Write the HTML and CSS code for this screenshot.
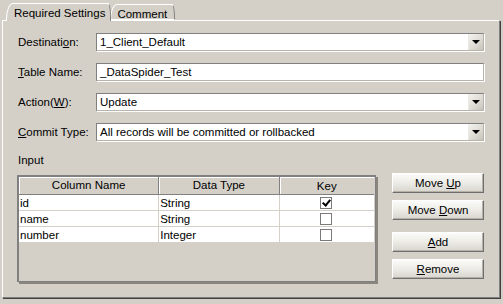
FILE: index.html
```html
<!DOCTYPE html>
<html lang="en">
  <head>
    <meta charset="UTF-8" />
    <title>Table Update - Required Settings</title>
    <link rel="stylesheet" href="styles.css">
  </head>
  <body>
    <div class="tabs">
      <div class="tab active">Required Settings</div>
      <div class="tab">Comment</div>
    </div>

    <div class="panel">
      <div class="field">
        <label>Destinati<u>o</u>n:</label>
        <div class="combo">
          <span class="value">1_Client_Default</span>
          <span class="drop"></span>
        </div>
      </div>

      <div class="field">
        <label><u>T</u>able Name:</label>
        <div class="text-box">_DataSpider_Test</div>
      </div>

      <div class="field">
        <label>Action(<u>W</u>):</label>
        <div class="combo">
          <span class="value">Update</span>
          <span class="drop"></span>
        </div>
      </div>

      <div class="field">
        <label><u>C</u>ommit Type:</label>
        <div class="combo">
          <span class="value">All records will be committed or rollbacked</span>
          <span class="drop"></span>
        </div>
      </div>

      <div class="section-title">Input</div>

      <div class="input-area">
        <div class="grid">
          <div class="grid-head">
            <div class="col-name">Column Name</div>
            <div class="col-type">Data Type</div>
            <div class="col-key">Key</div>
          </div>
          <div class="grid-row">
            <div class="col-name">id</div>
            <div class="col-type">String</div>
            <div class="col-key"><span class="check checked"></span></div>
          </div>
          <div class="grid-row">
            <div class="col-name">name</div>
            <div class="col-type">String</div>
            <div class="col-key"><span class="check"></span></div>
          </div>
          <div class="grid-row">
            <div class="col-name">number</div>
            <div class="col-type">Integer</div>
            <div class="col-key"><span class="check"></span></div>
          </div>
        </div>

        <div class="buttons">
          <div class="button-group">
            <button>Move <u>U</u>p</button>
            <button>Move <u>D</u>own</button>
          </div>
          <div class="button-group">
            <button><u>A</u>dd</button>
            <button><u>R</u>emove</button>
          </div>
        </div>
      </div>
    </div>
  </body>
</html>
```

FILE: styles.css
```css
/* General */
body {
  margin: 0;
  background: #d4d0c8;
  font-family: "Liberation Sans", Arial, sans-serif;
  font-size: 11.5px;
  color: #000;
  width: 503px;
  height: 304px;
  overflow: hidden;
}

u {
  text-decoration: underline;
  text-underline-offset: 1px;
}

/* Tabs */
.tabs {
  display: flex;
  height: 20px;
  padding-left: 6px;
  align-items: flex-end;
}

.tab {
  box-sizing: border-box;
  height: 17px;
  padding: 2px 5px 0 7px;
  line-height: 14px;
  border-top: 1px solid #fff;
  border-left: 1px solid #fff;
  border-right: 1px solid #808080;
  border-top-left-radius: 7px 16px;
  border-top-right-radius: 3px 14px;
  background: #d4d0c8;
  position: relative;
}

.tab.active {
  z-index: 1;
  height: 18px;
  margin-bottom: -1px;
}

.tab + .tab {
  margin-left: -1px;
  padding: 2px 7px 0 6px;
  height: 16px;
  border-bottom: 1px solid #fff;
}

/* Panel */
.panel {
  box-sizing: border-box;
  width: 498px;
  height: 278px;
  margin-left: 2px;
  border: 1px solid;
  border-color: #fff #808080 #808080 #fff;
  box-shadow: 1px 1px 0 #404040;
  padding: 12px 14px 0 15px;
}

/* Form rows */
.field {
  display: flex;
  align-items: center;
  height: 18px;
  margin-bottom: 12px;
}

.field label {
  width: 78px;
  flex: none;
}

.text-box,
.combo {
  box-sizing: border-box;
  width: 388px;
  height: 18px;
  background: #fff;
  border: 1px solid;
  border-color: #808080 #b8b4ac #b8b4ac #808080;
  box-shadow: 1px 1px 0 #fff;
}

.text-box {
  padding-left: 3px;
  line-height: 16px;
}

.combo {
  display: flex;
}

.combo .value {
  flex: 1;
  padding-left: 3px;
  line-height: 16px;
  white-space: nowrap;
}

.combo .drop {
  width: 14px;
  height: 16px;
  background: linear-gradient(135deg, #f4f3ef 0%, #dcd9d2 60%, #c6c2b9 100%);
  border-left: 1px solid #ebe9e4;
  position: relative;
}

.combo .drop::after {
  content: "";
  position: absolute;
  left: 3px;
  top: 6px;
  border-left: 4px solid transparent;
  border-right: 4px solid transparent;
  border-top: 4px solid #000;
}

.section-title {
  margin-top: 3px;
  height: 16px;
  line-height: 14px;
}

/* Input area */
.input-area {
  display: flex;
  margin-top: 6px;
  margin-left: -1px;
}

.grid {
  box-sizing: border-box;
  width: 359px;
  height: 107px;
  background: #d4d0c8;
  border: 1px solid #808080;
  box-shadow: inset 1px 1px 0 #808080, 2px 2px 0 #8a867e;
}

.grid-head,
.grid-row {
  display: flex;
}

.grid-head {
  height: 17px;
  line-height: 16px;
  margin: 1px 1px 0 1px;
  border-bottom: 1px solid #808080;
  text-align: center;
}

.grid-head > div {
  box-sizing: border-box;
  border-right: 1px solid #808080;
  box-shadow: inset 1px 1px 0 #fff;
}

.grid-row {
  height: 16px;
  line-height: 16px;
  background: #fff;
  margin: 0 1px;
  border-bottom: 1px solid #d4d0c8;
  box-sizing: border-box;
}

.grid-row > div {
  box-sizing: border-box;
  border-right: 1px solid #d4d0c8;
  padding-left: 1px;
}

.col-name {
  width: 141px;
}

.col-type {
  width: 121px;
}

.col-key {
  width: 95px;
  display: flex;
  justify-content: center;
  align-items: center;
}

.grid-head .col-key,
.grid-row .col-key {
  border-right: none;
}

.grid-row .col-key {
  padding-left: 0;
  padding-right: 2px;
}

.check {
  box-sizing: border-box;
  width: 12px;
  height: 12px;
  border: 1px solid #7a7a7a;
  background: #fff;
  position: relative;
}

.check.checked::after {
  content: "";
  position: absolute;
  left: 3px;
  top: 0;
  width: 3px;
  height: 6px;
  border-right: 2px solid #000;
  border-bottom: 2px solid #000;
  transform: rotate(40deg);
}

/* Buttons */
.buttons {
  display: flex;
  flex-direction: column;
  gap: 12px;
  margin-left: 16px;
  margin-top: -2px;
}

.button-group {
  display: flex;
  flex-direction: column;
  gap: 7px;
}

button {
  box-sizing: border-box;
  width: 92px;
  height: 20px;
  padding: 0;
  font-family: inherit;
  font-size: 11.5px;
  color: #000;
  background: linear-gradient(#fbfbf9 0%, #ecebe6 50%, #d8d5ce 100%);
  border: 1px solid;
  border-color: #fff #6e6e6e #6e6e6e #fff;
  box-shadow: inset -1px -1px 0 #b5b1a8;
  cursor: pointer;
}
```
